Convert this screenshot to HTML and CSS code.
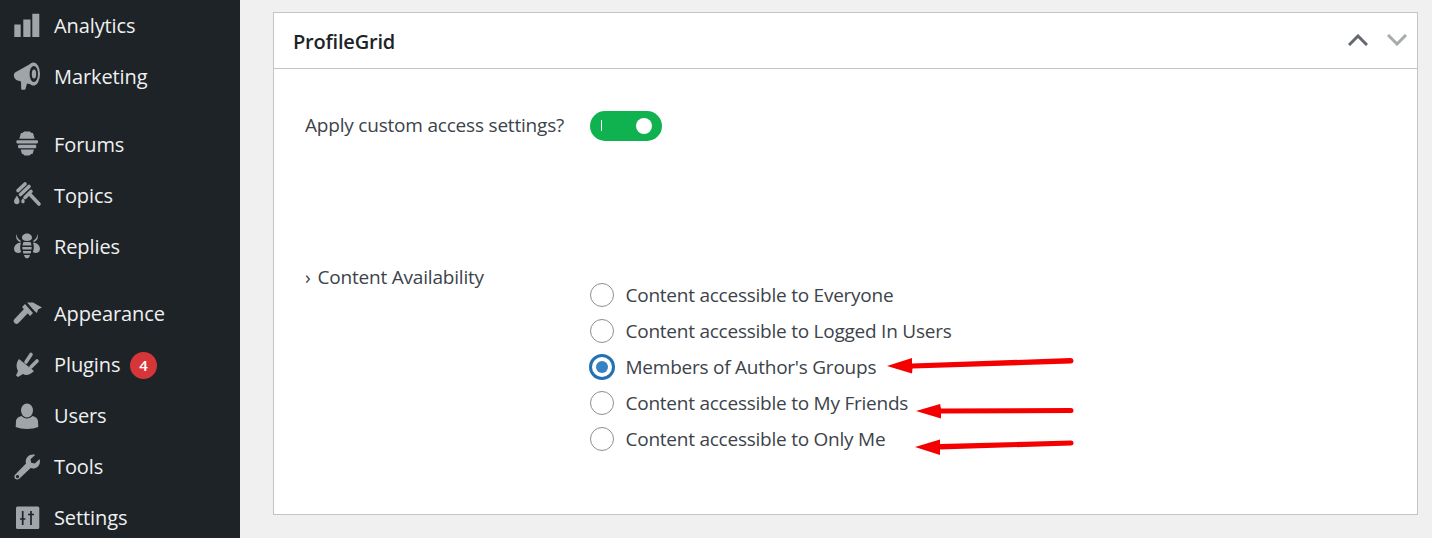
FILE: index.html
```html
<!DOCTYPE html>
<html lang="en">
<head>
<meta charset="utf-8">
<title>ProfileGrid access settings</title>
<link rel="stylesheet" href="styles.css">
</head>
<body>
<div class="page">
  <nav class="sidebar">
    <ul class="menu">
      <li class="item"><svg class="icon" viewBox="0 0 28 28"><path d="M1.300 12.500h6.400V25H1.300zM10.300 7.500h7.200V25h-7.200zM19.300 1.800h7V25h-7z"/></svg><span>Analytics</span></li>
      <li class="item"><svg class="icon" viewBox="0 0 28 28"><path d="M2 9.500 18 .5h3v21.500l-7-1.500-1.500 5.500c-.1.500-.5.800-1 .8H9c-.5 0-.8-.3-.8-.8L8 18.500l-4-1.300C1.500 16.500-.5 12 2 9.500z"/><ellipse cx="20.500" cy="11" rx="6.500" ry="11.500"/><ellipse class="cut" cx="20.800" cy="11" rx="4.200" ry="8"/><ellipse cx="21" cy="11" rx="2.200" ry="4.500"/></svg><span>Marketing</span></li>
      <li class="sep sep-first"></li>
      <li class="item"><svg class="icon" viewBox="0 0 28 28"><path d="M11 .5h6l1.500 1.500h1.500l1.700 5.800H6.300L8 2h1.500zM4.500 9.200h19.500c.7 0 1 .7 1 1.600s-.3 1.700-1 1.700H4.500c-.7 0-1.200-.7-1.200-1.700s.5-1.600 1.200-1.600zM6 13.800h16.500c.5 0 .8.700.8 1.700s-.3 1.700-.8 1.700H6c-.5 0-1-.7-1-1.700s.5-1.700 1-1.700zM7.700 18.500h13.300l-1.500 4.500H18l-1.500 1.500h-5L10 23H9z"/></svg><span>Forums</span></li>
      <li class="item"><svg class="icon" viewBox="0 0 28 28"><g class="line"><path d="M5 8.500 12 2M7.500 12.500 16 4.500M12 15.500l6-6M18 13.500l8 8.500"/></g><path d="M4 13.500c1.200 2 2.500 3.800 2.500 5.800 0 1.700-1.200 3-2.700 3s-2.800-1.300-2.800-3c0-2 1.800-3.800 3-5.800zM10 16c.8 1.200 1.700 2.300 1.700 3.500 0 1-.8 1.800-1.700 1.800s-1.700-.8-1.700-1.800c0-1.200.9-2.300 1.700-3.500z"/></svg><span>Topics</span></li>
      <li class="item"><svg class="icon" viewBox="0 0 28 28"><path d="M14 .5c2.700 0 5 1.700 5 4.200 0 1.800-1.500 3.300-5 3.300s-5-1.500-5-3.300C9 2.200 11.300.5 14 .5zM3.500 1c.3 3 1.500 5 4.500 7l-1 1C3.500 7.500 2.500 4.500 3.500 1zM24.500 1c-.3 3-1.500 5-4.500 7l1 1c3.500-1.500 4.500-4.500 3.500-8zM8 9.500c-.5 1.500-.8 3-.8 4.500 0 2 .3 3.500 1 5-1.500 1-3.500 1.300-5 .5C1.500 18.600.9 16.800 1.100 15 1.500 12 4.500 9.800 8 9.500zM20 9.500c.5 1.500.8 3 .8 4.500 0 2-.3 3.500-1 5 1.500 1 3.500 1.300 5 .5 1.700-.9 2.300-2.700 2.100-4.500C26.500 12 23.500 9.800 20 9.500zM10.500 9h7c.5 1 .8 2.200 1 3.500h-9c.2-1.300.5-2.500 1-3.500zM9.300 14h9.400l-.2 2.500H9.500zM9.800 18h8.400l-.6 2.500H10.400zM11 22h6l-1 2.500-2 1-2-1z"/></svg><span>Replies</span></li>
      <li class="sep"></li>
      <li class="item"><svg class="icon" viewBox="0 0 28 28"><path d="M14 2.500h6l9 5-4 2-1 3.500-2.500-2zM9 7l3-3 8 9-3 3z"/><path class="line line-wide" d="M12.500 11.500 3.500 21"/></svg><span>Appearance</span></li>
      <li class="item"><svg class="icon" viewBox="0 0 28 28"><path d="M6 8l15 12c-4 4-8 5-11 3l-5 3-2-1.500 2-4.500C3 16 3 12 6 8z"/><g class="line"><path d="M13 11l5-7.500M18 16l6-6"/></g></svg><span>Plugins</span></li>
      <li class="item"><svg class="icon" viewBox="0 0 28 28"><ellipse cx="14" cy="8.500" rx="6" ry="7"/><path d="M8.500 14c1.500 1.500 3.500 2.500 5.500 2.500s4-1 5.500-2.500c3 .5 5.300 2.500 5.500 5l.3 6c-3 1.300-7 2-11.300 2s-8.300-.7-11.300-2l.3-6c.2-2.500 2.500-4.500 5.500-5z"/></svg><span>Users</span></li>
      <li class="item"><svg class="icon" viewBox="0 0 28 28"><path fill-rule="evenodd" d="M26.500 6c1 2.800.3 5.800-1.800 7.800-2 1.800-4.700 2.200-7 1.300L6.500 25.500c-1.500 1.300-3.300 1.200-4.300.2s-1.200-3 .1-4.300L13 10.500c-.7-2.500-.2-5 1.600-6.800C16.700 1.600 19.700 1 22.300 1.800l-4.800 4.400.7 3.600 3.700.8zM4.500 22a1.600 1.600 0 1 0 .01 0z"/></svg><span>Tools</span></li>
      <li class="item"><svg class="icon" viewBox="0 0 28 28"><rect x="3" y="2.500" width="23.300" height="22.500" rx="1.500"/><g class="cut-line"><path d="M9.700 7v14M7 15h5.400M18 7v14M15 10.500h6"/></g></svg><span>Settings</span></li>
    </ul>
    <span class="badge">4</span>
  </nav>
  <main class="content">
    <section class="card">
      <header class="card-head">
        <h2 class="card-title">ProfileGrid</h2>
        <div class="card-actions">
          <svg class="chev chev-up" viewBox="0 0 20 12"><path d="M1 11 10 2l9 9"/></svg>
          <svg class="chev chev-down" viewBox="0 0 20 12"><path d="M1 1l9 9 9-9"/></svg>
        </div>
      </header>
      <div class="card-body">
        <div class="row row-toggle">
          <div class="label label-top">Apply custom access settings?</div>
          <div class="toggle"><span class="toggle-mark"></span><span class="toggle-knob"></span></div>
        </div>
        <div class="row row-options">
          <div class="label label-sub"><span class="caret">›</span>Content Availability</div>
          <ul class="options">
            <li class="option"><span class="radio"></span>Content accessible to Everyone</li>
            <li class="option"><span class="radio"></span>Content accessible to Logged In Users</li>
            <li class="option option-on"><span class="radio radio-on"></span>Members of Author's Groups</li>
            <li class="option"><span class="radio"></span>Content accessible to My Friends</li>
            <li class="option"><span class="radio"></span>Content accessible to Only Me</li>
          </ul>
        </div>
      </div>
    </section>
  </main>
  <svg class="arrows" viewBox="0 0 1432 538">
    <path d="M1070.500 358 L912 363.500 L912 358 L887 366 L912 373.500 L912.500 368.500 L1071 363.500 a2.700 2.700 0 0 0-.5-5.500z"/>
    <path d="M1071 408 L941 408.500 L940 404 L916 411 L941 418.500 L941 413.500 L1071 413 a2.500 2.500 0 0 0 0-5z"/>
    <path d="M1071 440.500 L940 444 L940 439.500 L915 447 L940 455 L940 449.500 L1071 445.500 a2.500 2.500 0 0 0 0-5z"/>
  </svg>
</div>
</body>
</html>
```

FILE: styles.css
```css
* { box-sizing: border-box; }
html, body { margin: 0; padding: 0; height: 100%; overflow: hidden; }
body { font-family: "Open Sans", "Noto Sans", "Liberation Sans", sans-serif; background: #f0f0f1; }
ul { list-style: none; margin: 0; padding: 0; }

.page { position: relative; display: flex; width: 1432px; height: 538px; overflow: hidden; }

.sidebar { position: relative; flex: 0 0 240px; background: #1d2327; }
.menu { display: flex; flex-direction: column; }
.item { display: flex; align-items: center; height: 51px; padding-left: 13px; color: #f0f0f1; font-size: 20px; letter-spacing: -0.1px; }
.item span { display: block; }
.icon { flex: 0 0 28px; width: 28px; height: 28px; margin-right: 13px; fill: #a0a5aa; overflow: visible; }
.line { fill: none; stroke: #a0a5aa; stroke-width: 3.6; stroke-linecap: round; }
.line-wide { stroke-width: 5.5; }
.cut { fill: #1d2327; }
.cut-line { fill: none; stroke: #1d2327; stroke-width: 1.7; }
.sep { height: 16px; }
.sep-first { height: 17px; }
.badge { position: absolute; left: 130px; top: 352px; width: 27px; height: 27px; border-radius: 50%; background: #d63638; color: #fff; font-size: 15px; font-weight: 600; line-height: 27px; text-align: center; }

.content { flex: 1; padding: 12px 14px 0 33px; }
.card { height: 503px; background: #fff; border: 1px solid #c3c4c7; }
.card-head { display: flex; align-items: center; justify-content: space-between; height: 56px; padding: 2px 10px 0 19px; border-bottom: 1px solid #c3c4c7; }
.card-title { margin: 0; font-size: 20px; font-weight: 600; color: #1d2327; letter-spacing: -0.2px; }
.card-actions { display: flex; gap: 19px; margin-top: -3px; }
.chev { width: 20px; height: 12px; fill: none; stroke-width: 3; }
.chev-up { stroke: #646970; }
.chev-down { stroke: #a7aaad; }

.card-body { padding: 42px 0 0 31px; }
.row { display: grid; grid-template-columns: 285px 1fr; color: #3c434a; font-size: 19px; }
.row-toggle { align-items: center; height: 30px; }
.row-options { margin-top: 122px; }
.label { letter-spacing: -0.2px; }
.label-top { padding-bottom: 2px; }
.label-sub { line-height: 28px; }
.caret { margin-right: 7px; }

.toggle { position: relative; width: 72px; height: 30px; border-radius: 15px; background: #10b14f; }
.toggle-mark { position: absolute; left: 11px; top: 9px; width: 1px; height: 11px; background: #fff; }
.toggle-knob { position: absolute; right: 10px; top: 7px; width: 16px; height: 16px; border-radius: 50%; background: #fff; }

.options { display: flex; flex-direction: column; padding-top: 14px; }
.option { display: flex; align-items: center; height: 36px; letter-spacing: -0.24px; white-space: nowrap; }
.radio { flex: 0 0 24px; width: 24px; height: 24px; margin-right: 11.5px; border: 1px solid #8c8f94; border-radius: 50%; background: #fff; display: flex; align-items: center; justify-content: center; }
.radio-on { border: 3px solid #2271b1; width: 26px; height: 26px; flex-basis: 26px; margin: 0 10.5px 0 -1px; }
.radio-on::before { content: ""; width: 12px; height: 12px; border-radius: 50%; background: #3582c4; }

.arrows { position: absolute; left: 0; top: 0; width: 1432px; height: 538px; fill: #f40000; pointer-events: none; }
```
